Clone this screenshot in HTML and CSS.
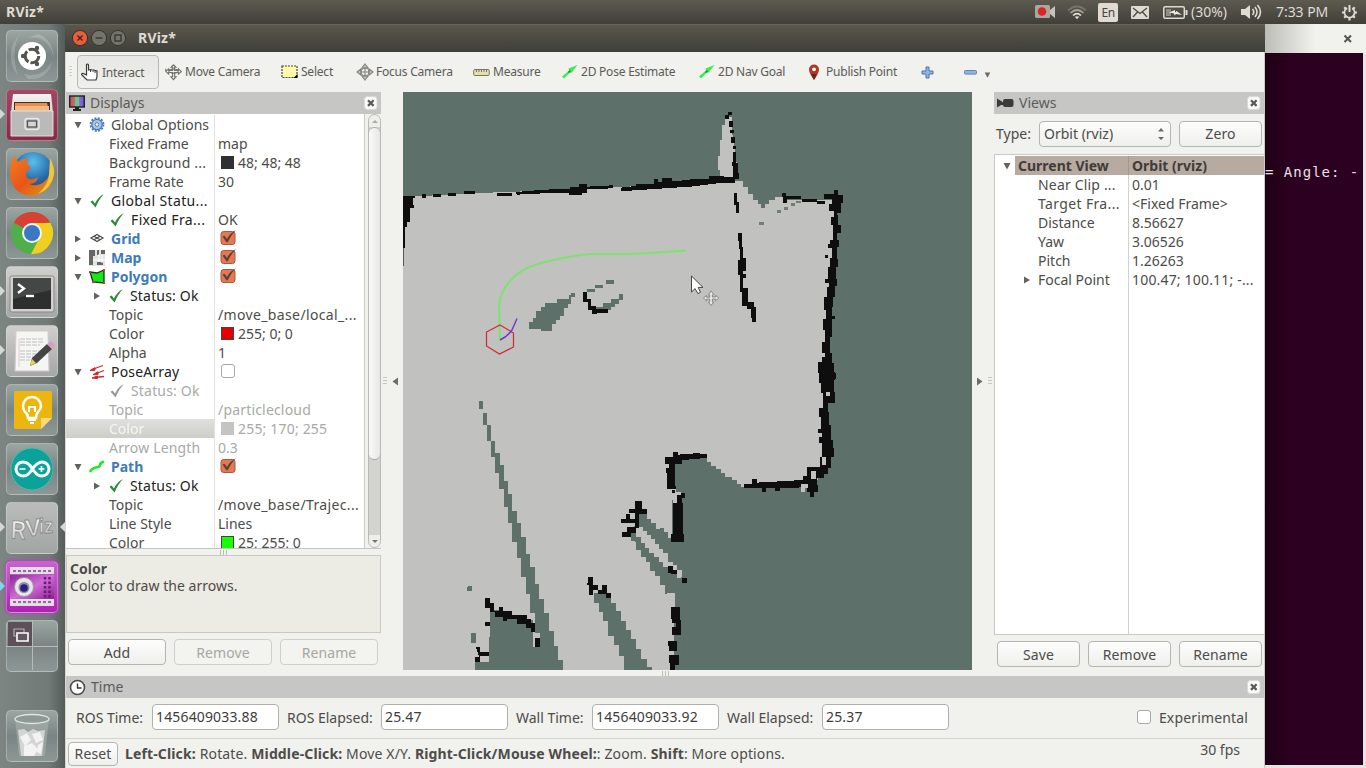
FILE: index.html
```html
<!DOCTYPE html>
<html lang="en">
<head>
<meta charset="utf-8">
<title>RViz*</title>
<link rel="stylesheet" href="styles.css">
</head>
<body>
<svg class="defs" width="0" height="0" aria-hidden="true">
  <defs>
    <linearGradient id="glass" x1="0" y1="0" x2="0" y2="1"><stop offset="0" stop-color="#f4f4f4"/><stop offset="1" stop-color="#a9a9a9"/></linearGradient>
    <linearGradient id="metal" x1="0" y1="0" x2="0" y2="1"><stop offset="0" stop-color="#ffffff"/><stop offset="1" stop-color="#c4c4c4"/></linearGradient>
    <linearGradient id="fox" x1="0" y1="0" x2="1" y2="1"><stop offset="0" stop-color="#f08020"/><stop offset=".5" stop-color="#e85518"/><stop offset="1" stop-color="#d8a018"/></linearGradient>
    <radialGradient id="globe" cx=".5" cy=".25" r=".8"><stop offset="0" stop-color="#5cc0ea"/><stop offset=".6" stop-color="#2467a8"/><stop offset="1" stop-color="#123a78"/></radialGradient>
    <linearGradient id="rgb" x1="0" y1="0" x2="1" y2="0"><stop offset="0" stop-color="#d04a5a"/><stop offset=".33" stop-color="#c46a70"/><stop offset=".34" stop-color="#69c880"/><stop offset=".66" stop-color="#69c880"/><stop offset=".67" stop-color="#8a70d8"/><stop offset="1" stop-color="#6a50d0"/></linearGradient>
    <linearGradient id="purple" x1="0" y1="0" x2="1" y2="1"><stop offset="0" stop-color="#8a2a92"/><stop offset=".5" stop-color="#d06ad6"/><stop offset="1" stop-color="#86208e"/></linearGradient>
    <symbol id="check" viewBox="0 0 16 16"><path d="M1.500 8.800 3.600 7.400 6 10.600C8 6.300 10.700 3.100 14.800 1 11.400 4.800 9 9 6.600 14.500Z"/></symbol>
    <symbol id="down" viewBox="0 0 10 10"><path d="M1.500 2h7L5 8.500z"/></symbol>
    <symbol id="right" viewBox="0 0 10 10"><path d="M2 1.500v7L8 5z"/></symbol>
    <symbol id="ticked" viewBox="0 0 18 18"><rect x="2" y="2.500" width="14" height="13" rx="2.500" fill="#e87650" stroke="#a85a43"/><path d="M3.500 7.600 5.600 6.700 8 10C10 6 12.500 3.500 17 1 13.200 5 10.800 9 8.700 13.300H7.400Z" fill="#54453c"/></symbol>
    <symbol id="close" viewBox="0 0 14 14"><rect x=".5" y=".5" width="12.500" height="13" rx="3" fill="#fbfbfa" stroke="#d8d8d6"/><path d="m4 4.300 5.600 5.600m0-5.600L4 9.900" stroke="#5a5a56" stroke-width="2.300"/></symbol>
    <symbol id="move" viewBox="0 0 18 18"><g fill="none" stroke="#74746f" stroke-width="1.200"><path d="M9 .8 6.500 3.500H8v3.200H3.800V5.200L1 7.500H.8V5M9 .8l2.500 2.700H10v3.200h4.200V5.200L17.200 8l-3 2.600V9h-4v4.500h1.500L9 16.500l-2.700-3H8V9H3.800v1.600L1 8"/><ellipse cx="9" cy="7.500" rx="5" ry="2.200"/></g></symbol>
    <symbol id="arrow2d" viewBox="0 0 18 16"><path d="M1 12.600 8 6.500 7.500 4.500 16.500 1 10.500 8.800 9.500 8 3 14.500z" fill="#3fec50"/><path d="m7 8 2-2 1 2-2 1z" fill="#0a9728"/></symbol>
  </defs>
</svg>
<div class="screen">
  <header class="panel">
    <span class="app-name">RViz*</span>
    <div class="tray">
      <svg class="t-rec" width="22" height="16" viewBox="0 0 22 16"><rect x="0" y="1" width="15" height="13" rx="1.500" fill="#a9a8a0"/><path d="m15 6 5-4v12l-5-4z" fill="#c5c4bb"/><circle cx="7" cy="7.500" r="4.300" fill="#e02222"/></svg>
      <svg class="t-wifi" width="20" height="15" viewBox="0 0 20 15" fill="none"><path d="M1 5.500Q10-2.500 19 5.500" stroke="#77766c" stroke-width="1.700"/><path d="M3.500 8Q10 2 16.500 8" stroke="#a5a499" stroke-width="1.700"/><path d="M6 10.500Q10 6.500 14 10.500" stroke="#dfdbd2" stroke-width="1.700"/><path d="m7.800 11.800 2.200 2.500 2.200-2.500Q10 10.500 7.800 11.800" fill="#dfdbd2"/></svg>
      <span class="lang">En</span>
      <svg class="t-mail" width="18" height="13" viewBox="0 0 18 13"><rect width="18" height="13" rx="1" fill="#dfdbd2"/><path d="m2 2 7 5.500L16 2M2 11l4.500-5M16 11l-4.500-5" stroke="#4a4941" stroke-width="1.300" fill="none"/></svg>
      <svg class="t-bat" width="25" height="13" viewBox="0 0 25 13"><rect x=".8" y=".8" width="20.500" height="11.400" rx="1.500" fill="none" stroke="#dfdbd2" stroke-width="1.500"/><path d="M22.500 4h2v5h-2z" fill="#dfdbd2"/><path d="M3 3h5v7H3z" fill="#8e8d83"/><path d="m6 6.500 6-2.500v2.500L13.500 5 19 9l-6-1-1.500 1.500-.5-2z" fill="#eceae2"/></svg>
      <span class="pct">(30%)</span>
      <svg class="t-vol" width="21" height="16" viewBox="0 0 21 16"><path d="M0 5h4l5-4v14l-5-4H0z" fill="#dfdbd2"/><path d="M11.500 5q2.500 3 0 6M14 3q4 5 0 10M16.500 1q6 7 0 14" stroke="#dfdbd2" stroke-width="1.600" fill="none"/></svg>
      <span class="clock">7:33 PM</span>
      <svg class="t-gear" width="17" height="17" viewBox="0 0 17 17" fill="none" stroke="#dfdbd2"><circle cx="8.500" cy="8.500" r="5" stroke-width="1.900" stroke-dasharray="25.500 6" transform="rotate(-57 8.500 8.500)"/><path d="M8.500 1v7" stroke-width="2"/><path d="M8.500 14v2.500M1 8.500h2.500M13.500 8.500H16M3.200 3.200 5 5M12 5l1.800-1.800M3.200 13.800 5 12M12 12l1.800 1.800" stroke-width="2.200"/></svg>
    </div>
  </header>
  <div class="desktop">
    <nav class="launcher">
      <div class="tile t-gray"><svg viewBox="0 0 52 52"><path d="M14 3Q4 22 12 45Q2 35 6 16ZM22 8q20-4 26 20-2-20-16-24zM18 44q18 5 28-12-4 18-24 17z" fill="#fff" opacity=".18"/><circle cx="26" cy="26" r="14" fill="#fff"/><circle cx="26" cy="26" r="6.800" fill="none" stroke="#54534e" stroke-width="3" stroke-dasharray="12.200 2"/><circle cx="17" cy="26" r="2.200" fill="#54534e"/><circle cx="31" cy="18" r="2.200" fill="#54534e"/><circle cx="31" cy="34" r="2.200" fill="#54534e"/></svg></div>
      <div class="tile t-red"><svg viewBox="0 0 52 52"><path d="M7 5h38l2 18v24H5V23z" fill="url(#glass)"/><path d="M8 13h36v8H8z" fill="#40322b"/><path d="M9 14h32l2 7H9z" fill="#e98c46"/><path d="M9 17h34v5H9z" fill="#f4b781"/><path d="M5 22h42v25H5z" fill="#bababa" stroke="#dedede"/><rect x="19" y="29.500" width="14" height="11" rx="2.500" fill="none" stroke="#e8e8e8" stroke-width="1.500"/><rect x="21.500" y="32" width="9" height="6" fill="#d5d5d5" stroke="#555" stroke-width="1.300"/></svg></div>
      <div class="tile t-gray"><svg viewBox="0 0 52 52"><circle cx="27" cy="24" r="20" fill="url(#globe)"/><path d="M4 27Q3 13 9 8l3 6q5-4 10-3l-1 5 4 4-5 4q-1 5 3 7 5 1 9-2-1 7-9 7 10 4 18-5 4-6 3-13l4 6q0 12-8 18-7 6-15 6Q6 46 4 27z" fill="url(#fox)"/><path d="M44 10q5 9 4 17-3 14-16 19 11-10 11-20z" fill="#f2c53a"/></svg></div>
      <div class="tile t-gray"><svg viewBox="0 0 52 52"><circle cx="26" cy="26" r="21" fill="#4fb04a"/><path d="M26 26 44.200 15.500A21 21 0 0 1 25 47l9-17z" fill="#f2cf1f"/><path d="M26 26 7.800 15.500A21 21 0 0 1 44.200 15.500L26 17z" fill="#da3f36"/><path d="M26 16h18.400l2 8H26z" fill="#f2cf1f"/><circle cx="26" cy="26" r="10" fill="#f4f4f4"/><circle cx="26" cy="26" r="8" fill="#3b78c4"/></svg></div>
      <div class="tile t-light"><svg viewBox="0 0 52 52"><rect x="4" y="10" width="44" height="36" rx="2" fill="#d2d2d0" stroke="#888"/><rect x="7" y="12" width="38" height="31" fill="#2d2f2e"/><path d="M7 12h38v12L7 33z" fill="#454746"/><path d="m12 18 6 4.500-6 4.500" fill="none" stroke="#fff" stroke-width="2.300"/><path d="M20 30h8" stroke="#fff" stroke-width="2.300"/></svg></div>
      <div class="tile t-light"><svg viewBox="0 0 52 52"><path d="M10 6h32l1 40H9z" fill="#f5f5f4" stroke="#ccc"/><path d="M14 14h23M14 17h23M14 20h20M14 26h22M14 29h20M14 32h14M14 35h10" stroke="#c0c0c0" stroke-width="1" stroke-dasharray="5 1"/><path d="M13 14v28" stroke="#e5caca"/><path d="m24 41 2-8L41 19l5 5-15 14z" fill="#454545"/><path d="m41 19 4-3 4 4-3 4z" fill="#dc9bc3"/><path d="m24 41 2-7 4 4z" fill="#e4d54e"/></svg></div>
      <div class="tile t-gray"><svg viewBox="0 0 52 52"><path d="M9 7h36q1 0 1 2v25L35 45H9q-1 0-1-2V9q0-2 1-2z" fill="#edb60f"/><path d="M35 45V34h11z" fill="#f9dc7a"/><path d="M22 34q0-4-3-6-2-3-2-6a9 9 0 0 1 18 0q0 3-3 6-2 2-2 6z" fill="none" stroke="#fff" stroke-width="2.500"/><path d="M23 28v-5h6v5M22 36h8M24 39h4" stroke="#fff" stroke-width="2" fill="none"/></svg></div>
      <div class="tile t-gray"><svg viewBox="0 0 52 52"><circle cx="26" cy="26" r="21" fill="#0ba29a" stroke="#4cbdb6"/><path d="M26.500 26C23 20 20 19 17 19a7 7 0 0 0 0 14c4 0 6-2 9.500-7s6-7 9.500-7a7 7 0 0 1 0 14c-4 0-6-2-9.500-7z" fill="none" stroke="#fff" stroke-width="3"/><path d="M13.500 26h6M32.500 26h6M35.500 23v6" stroke="#fff" stroke-width="1.700"/></svg></div>
      <div class="tile t-mid"><svg viewBox="0 0 52 52"><g class="rviz-logo"><text x="5" y="37" font-size="26" textLength="15" lengthAdjust="spacingAndGlyphs" transform="rotate(3 12 28)">R</text><text x="19" y="34" font-size="24" textLength="16" lengthAdjust="spacingAndGlyphs" transform="rotate(-5 26 26)">V</text><text x="33" y="31" font-size="20" textLength="14" lengthAdjust="spacingAndGlyphs">iz</text></g></svg></div>
      <div class="tile t-purple"><svg viewBox="0 0 52 52"><rect x="4" y="14" width="44" height="25" fill="url(#purple)"/><path d="M4 6h44v7H4zM4 38h44v7H4z" fill="#e6dce8"/><path d="M7 10h38M7 41h38" stroke="#8f6e96" stroke-width="2" stroke-dasharray="3 2"/><path d="M39 16v21M43.500 16v21" stroke="#6c1a76" stroke-width="2.500" stroke-dasharray="2.500 2"/><circle cx="18" cy="26" r="9.500" fill="#e6e6e8" stroke="#999"/><circle cx="18" cy="26.500" r="5.500" fill="#8d8d9c"/><circle cx="18" cy="27" r="3.800" fill="#2d1b8a"/></svg></div>
      <div class="tile t-gray"><svg viewBox="0 0 52 52"><path d="M2 2h25v25H2z" fill="#5e5059"/><path d="M26.500 0v50M0 26.500h52" stroke="#b5bcba" stroke-width="1"/><path d="M8 9h10v7H8z" fill="none" stroke="#b5adb2" stroke-width="1.200"/><path d="M11 13h11v8H11z" fill="#65565f" stroke="#fff" stroke-width="1.600"/></svg></div>
      <div class="tile t-gray trash"><svg viewBox="0 0 52 52"><path d="M9 8h34l-4 38H13z" fill="#a9b0ae" opacity=".6"/><path d="m12 20 6-1 4 3 5-3 5 2 7-1-3 26H15z" fill="#d2d5d4"/><path d="m14 27 7-4 4 7-6 6zm12-3 8-2 3 8-7 3zm-8 12 8-3 6 6-4 7H18zm14-1 5-3-2 12-4-2z" fill="#fff" opacity=".7"/><ellipse cx="26" cy="9" rx="17" ry="4.500" fill="#8f9896" stroke="#dfe3e1" stroke-width="1.400"/></svg></div>
      <i class="pip p1"></i><i class="pip p2"></i><i class="pip p3"></i><i class="pip p4"></i><i class="pip p5"></i><i class="pip back"></i>
    </nav>

    <main class="window">
      <div class="titlebar">
        <svg width="58" height="18" viewBox="0 0 58 18"><circle cx="9" cy="9" r="7.600" fill="#e75e3c" stroke="#35342e"/><path d="m6.500 6.500 5 5m0-5-5 5" stroke="#5a2318" stroke-width="1.500"/><circle cx="28" cy="9" r="7.600" fill="#75746c" stroke="#35342e"/><path d="M24.500 9h7" stroke="#3b3a34" stroke-width="1.500"/><circle cx="47" cy="9" r="7.600" fill="#75746c" stroke="#35342e"/><path d="M44 6h6v6h-6z" fill="none" stroke="#3b3a34" stroke-width="1.500"/></svg>
        <span>RViz*</span>
      </div>
      <div class="toolbar">
        <span class="grip"></span>
        <div class="tool active w1"><svg width="18" height="18" viewBox="0 0 18 18"><path d="M5.500 9V2q0-1 1-1t1 1v5l2-.5 1.500.5 2 0 1.500.7 1.500.3v6l-1 3H6L1 12q-.8-1 .2-1.500T5.500 12z" fill="#fff" stroke="#3a3a37" stroke-width="1.200"/><path d="M9.500 7v2M12 7.500V9M14 8v2" stroke="#3a3a37"/></svg><span>Interact</span></div>
        <div class="tool w2"><svg width="17" height="17"><use href="#move"/></svg><span>Move Camera</span></div>
        <div class="tool w3"><svg width="17" height="14" viewBox="0 0 17 14"><rect x="1" y="1" width="15" height="11.500" fill="#fff9ae" stroke="#494833" stroke-width="1.200" stroke-dasharray="2 1"/><path d="M16.500 9v4h-4z"/></svg><span>Select</span></div>
        <div class="tool w4"><svg width="18" height="18" viewBox="0 0 18 18" fill="none" stroke="#85857f" stroke-width="1.200"><path d="m9 1 3 4H6zM9 17l3-4H6zM1 9l4-3v6zM17 9l-4-3v6z" fill="#c9c9c4"/><circle cx="9" cy="9" r="4"/><path d="M9 5v8M5 9h8"/></svg><span>Focus Camera</span></div>
        <div class="tool w5"><svg width="17" height="9" viewBox="0 0 17 9"><rect x=".7" y="1.500" width="15.500" height="6" rx="1" fill="#e5dfab" stroke="#77756a"/><path d="M3.500 2v2M6 2v2M8.500 2v2M11 2v2M13.500 2v2" stroke="#77756a"/></svg><span>Measure</span></div>
        <div class="tool w6"><svg width="18" height="16"><use href="#arrow2d"/></svg><span>2D Pose Estimate</span></div>
        <div class="tool w7"><svg width="18" height="16"><use href="#arrow2d"/></svg><span>2D Nav Goal</span></div>
        <div class="tool w8"><svg width="14" height="17" viewBox="0 0 14 17"><path d="M7 16Q2 9 2 5.500a5 5 0 0 1 10 0Q12 9 7 16z" fill="#b23527"/><path d="M4 10h6l-3 6z" fill="#5b3024"/><circle cx="7" cy="5.300" r="1.900" fill="#fff"/></svg><span>Publish Point</span></div>
        <div class="tool w9"><svg width="13" height="13" viewBox="0 0 13 13"><path d="M5 1h3v4h4v3H8v4H5V8H1V5h4z" fill="#8fb4e0" stroke="#4a74ab"/></svg></div>
        <div class="tool"><svg width="13" height="5" viewBox="0 0 13 5"><rect x=".5" y=".5" width="12" height="3.600" rx="1" fill="#8fb4e0" stroke="#5f87ba"/></svg><svg class="caret" width="9" height="8" fill="#6b6b66"><use href="#down"/></svg></div>
      </div>

      <div class="center">
        <section class="displays">
          <div class="dock-head"><svg width="16" height="17" viewBox="0 0 16 17"><rect x=".7" y="1" width="14.600" height="11" fill="url(#rgb)" stroke="#222" stroke-width="1.400"/><path d="M6 12h4v2h2v2H4v-2h2z" fill="#222"/></svg><span>Displays</span><svg class="x" width="14" height="14"><use href="#close"/></svg></div>
          <div class="tree-wrap">
            <div class="tree">
              <div class="row"><div class="k top"><svg class="ar"><use href="#down"/></svg><svg class="ic" viewBox="0 0 16 16"><circle cx="8" cy="7.500" r="5.200" fill="#a9c7e8" stroke="#4a7db8" stroke-width="1.300"/><circle cx="8" cy="7.500" r="6.500" fill="none" stroke="#4a7db8" stroke-width="1.800" stroke-dasharray="2 1.400"/><circle cx="8" cy="7.500" r="1.800" fill="#fff" stroke="#4a7db8"/></svg><span>Global Options</span></div><div class="v"></div></div>
              <div class="row"><div class="k prop">Fixed Frame</div><div class="v">map</div></div>
              <div class="row"><div class="k prop wide">Background ...</div><div class="v"><i class="sw dark"></i>48; 48; 48</div></div>
              <div class="row"><div class="k prop">Frame Rate</div><div class="v">30</div></div>
              <div class="row blk"><div class="k top wider"><svg class="ar"><use href="#down"/></svg><svg class="ic ok"><use href="#check"/></svg><span>Global Statu...</span></div><div class="v"></div></div>
              <div class="row blk"><div class="k stat wider"><svg class="ic ok"><use href="#check"/></svg><span>Fixed Fra...</span></div><div class="v soft">OK</div></div>
              <div class="row"><div class="k top"><svg class="ar"><use href="#right"/></svg><svg class="ic" viewBox="0 0 16 16" fill="none" stroke="#4b4b48" stroke-width="1.200"><path d="m8 3.500 6 3.500-6 3.500L2 7zM5 5.200l6 3.600M11 5.200 5 8.800"/></svg><b>Grid</b></div><div class="v"><svg class="cb"><use href="#ticked"/></svg></div></div>
              <div class="row"><div class="k top"><svg class="ar"><use href="#right"/></svg><svg class="ic" viewBox="0 0 16 16"><path d="M0 0h16v16H0z" fill="#e4e4e3"/><path d="M0 0h6v6H4v9H0zM8 0h2v5H8zM12 0h4v4h-4zM8 12h6v3H8z" fill="#666663"/><path d="M4 10h12M10 4v8M13 5v8" stroke="#fff"/></svg><b>Map</b></div><div class="v"><svg class="cb"><use href="#ticked"/></svg></div></div>
              <div class="row"><div class="k top"><svg class="ar"><use href="#down"/></svg><svg class="ic" viewBox="0 0 16 16"><path d="m1 3 7 1 7-3v13L4 13z" fill="#19e619" stroke="#14391a" stroke-width="1.300"/><path d="M0 2h2v2H0zM14 0h2v2h-2zM3 12h2v2H3zM14 13h2v2h-2z" fill="#e03030"/></svg><b>Polygon</b></div><div class="v"><svg class="cb"><use href="#ticked"/></svg></div></div>
              <div class="row blk"><div class="k stat2 wide"><svg class="ar"><use href="#right"/></svg><svg class="ic ok"><use href="#check"/></svg><span>Status: Ok</span></div><div class="v"></div></div>
              <div class="row"><div class="k prop">Topic</div><div class="v wider">/move_base/local_...</div></div>
              <div class="row"><div class="k prop">Color</div><div class="v"><i class="sw red"></i>255; 0; 0</div></div>
              <div class="row"><div class="k prop">Alpha</div><div class="v">1</div></div>
              <div class="row blk"><div class="k top wide"><svg class="ar"><use href="#down"/></svg><svg class="ic" viewBox="0 0 16 16" fill="none" stroke="#d02a2a"><path d="M3 5.500 14 1.500M7 9.500 15 6.500M6 13.500l9-1" stroke-width="1.300"/><path d="m1 6.500 5-2.800v2.600zM4 10.700l5-3v2.800zM3 14l5.500-2v2.600z" fill="#d02a2a" stroke-width="1"/></svg><span>PoseArray</span></div><div class="v"><i class="box"></i></div></div>
              <div class="row dim"><div class="k stat wide"><svg class="ic off"><use href="#check"/></svg><span>Status: Ok</span></div><div class="v"></div></div>
              <div class="row dim"><div class="k prop">Topic</div><div class="v wide">/particlecloud</div></div>
              <div class="row dim"><div class="k prop sel">Color</div><div class="v wide"><i class="sw gray"></i>255; 170; 255</div></div>
              <div class="row dim"><div class="k prop wide">Arrow Length</div><div class="v">0.3</div></div>
              <div class="row"><div class="k top"><svg class="ar"><use href="#down"/></svg><svg class="ic" viewBox="0 0 16 16"><path d="M1 13q2-4 6-4.500T11 6t4-3.500" fill="none" stroke="#22e826" stroke-width="2.600"/></svg><b>Path</b></div><div class="v"><svg class="cb"><use href="#ticked"/></svg></div></div>
              <div class="row blk"><div class="k stat2 wide"><svg class="ar"><use href="#right"/></svg><svg class="ic ok"><use href="#check"/></svg><span>Status: Ok</span></div><div class="v"></div></div>
              <div class="row"><div class="k prop">Topic</div><div class="v wider">/move_base/Trajec...</div></div>
              <div class="row"><div class="k prop">Line Style</div><div class="v">Lines</div></div>
              <div class="row"><div class="k prop">Color</div><div class="v"><i class="sw green"></i>25; 255; 0</div></div>
            </div>
            <div class="scroll"><span class="btn-up"></span><span class="thumb"></span><span class="rest"></span><span class="btn-dn"></span></div>
          </div>
          <div class="hsplit"><i></i><i></i><i></i></div>
          <div class="desc"><b>Color</b><span>Color to draw the arrows.</span></div>
          <div class="buttons"><span class="button">Add</span><span class="button off">Remove</span><span class="button off">Rename</span></div>
        </section>
        <div class="vsplit left"><i class="dots"></i><svg width="9" height="9" fill="#6d6d69"><path d="M7 .5v8L1.500 4.500z"/></svg></div>
        <svg class="map" width="569" height="578" viewBox="403 92 569 578">
          <rect x="403" y="92" width="569" height="578" fill="#5d7069"/>
          <g shape-rendering="crispEdges">
            <path fill="#c1c1bf" d="M403 197 480 193 560 190 740 181 H743V187H748V194H753V200H758V204H761V208H765V204H769V200H775V197H784V200H836V215L832 260 828 320 824 380 829 460 815 484 745 487H741V484H737V480H732V477H725V473H721V469H716V466H711V462H707V458H672V545H668V532H664V528H660V534L640 514 630 535 650 560 676 600V670H403Z"/>
            <g transform="translate(690 90) scale(.33333)">
              <path fill="#c1c1bf" d="M90 262V240H85V198H90V150H97V105H105V80H125V120L135 180 145 262Z"/>
              <path fill="#0d0e0d" d="M114 66h12v10h-12zM105 76h12v10h-12zM117 93h12v17h-12zM120 120h12v10h-12zM123 140h12v20h-12zM128 168h9v10h-9zM129 186h10v34h4v28h5v20h-18v-40h-3zM0 268 57 266V258H103V262H136V278H100L0 290ZM132 308h10v28h5v32h-10v-22h-5zM144 429h12v42h4v32h7v40h-8v10h9v11h-10v30h17v42h18v14h5v47h-12v-12h-4v-28h-12v-10h-14v-40h-5v-52h-6v-46h6v-32h-4z"/>
              <path fill="#0d0e0d" d="M276 309h12v8h46v9h46v8h26v8h-24v-6h-45v-8h-45v11H280ZM403 312H431V300H445V314H460V338H453V368H440V375H445V405H452V428H442V450H447V470H440V508H445V532H438V568H442V588H436V620H430V650H425V677H434V686H427V740H421V790H426V820H432V845H436V870H388V850H385V815H395V800H405V788H397V755H405V720H399V686H408V660H402V622H410V590H416V578H406V567H414V530H421V505H427V473H415V462H420V450H428V405H424V380H432V362H418V342H426V326H403ZM404 494h11v9h-11z"/>
              <path fill="#6d7f77" d="M261 360h12v10h-12zM282 350h12v9h-12zM303 339h11v8h-11zM208 395h13v9h-13zM318 332h16v6h-16z"/>
            </g>
            <g transform="translate(400 90) scale(.33333)">
              <path fill="#0d0e0d" d="M9 317H45V325H38V345H42V354H30V395H20V411H15V474H9ZM67 313h11v10H67zM100 311h23v9h-23zM145 309h24v9h-24zM192 303h32v10h-32zM291 310h45v7h-45zM348 306 435 299 510 296V292H537V283H560V290L638 286V295L560 298V309H545V315H507V308L430 310 350 314ZM663 293 708 288V282H762V268H775V276H787V265H815V273L900 269V288L690 302H663Z"/>
              <path fill="#555654" d="M9 474h4v55H9z"/>
              <path fill="#5d7069" d="M513 609h12v11h-12v21h-8v14h-12v23h-12v12h-12v12h-12v22h-35v-7h-36v-21h12v-12h10v-20h15v-12h12v-12h37v-12h36v-12h7zM562 598h22v8h-22zM584 585h24v8h-24zM618 570h24v11h-24zM656 611h13v20h-12v10h-12v10h-13v10h-50v-10h26v-12h24v-12h24z"/>
              <path fill="#0d0e0d" d="M549 607h12v20h12v22h14v8h37v11h-34v3h-15v-11h-11v-24h-15z"/>
            </g>
            <g transform="translate(400 380) scale(.33333)">
              <g fill="#5d7069">
                <path d="M237 63h12v24h-12zM249 100h12v35h-12zM261 135h12v48h-12zM273 183h12v47h-12zM285 220V280H297V328H312V380H324V430H337V485H351V535H363V590H378V643H390V700H405V760H420V869H489V840H475V798H462V753H447V700H432V657H417V613H405V562H390V522H378V470H363V430H351V392H336V342H324V304H312V255H300V220z"/>
                <path d="M270 690H310V705H350V720H400V800H430V870H225V845H267V770H270ZM203 618h12v14h-14zM214 759h13v30h-13z"/>
                <path d="M582 640H633V668H648V693H663V722H678V750H693V778H708V808H723V836H740V862H755V870H672V828H658V796H642V768H625V722H610V695H596V668H582Z"/>
                <path d="M718 402H740V416H754V428H768V446H783V462H798V475H812V485H825V560H900V870H826V655H812V641H796V614H780V587H765V573H750V546H737V532H722V510H708V484H693V462H708V470H722V488H735V505H750V519H762V532H776V545H790V558H806V572H840V560H820V545H805V515H790V505H778V490H765V476H752V465H738V450H718Z"/>
                <path d="M822 245H925V870H822V560L845 485H822Z"/>
              </g>
              <path fill="#c1c1bf" d="M728 440V452H742V466H752V478H765V492H778V506H790V518H803V545H818V555H832V570H845V592H832V580H804V560H790V545H776V532H762V519H748V505H735V488H722V470H708V440ZM800 640h25v45h-12v170h-18zM812 318h15v17h15v12h-11v23h-12z"/>
              <path fill="#0d0e0d" d="M255 655H270V668H282V692H296V682H309V692H335V704H380V716H392V730H405V757H392V743H378V732H350V718H322V722H309V710H284V696H270V684H255ZM255 726h15v13h-15zM228 801h12v14h27v13h-27v17h-15v-14h13zM404 773h16v28h-16zM564 590h15v25h14v14h13v-14h15v25h12v15h-15v-12h-24v-12h-15v14h-13v-30h-4zM704 363h21v24h15v14h-24v43h-8v14h-15v14h-26v-15h13v-15h24v-14h-40v-11h14v-14h13v14h13v-17h-16v-12h16zM804 558h14v12h13v13h-18v-5h-10zM846 595h15v13h-15zM795 230H820V216H834V224L900 219V236L847 240V252H824V318H828V328H802V280H798V265H808V253H795ZM815 330h11v10h-11zM843 338h12v16h-10v16h3v92h4v24h-39v-24h7v-92h10v-25h13z"/>
              <path fill="#0d0e0d" d="M813 682h26v37h5v47h-27v-26h10v-12h-12zM805 783h27v29h-25v-14h-4zM808 826h28v28h-11v16h-14v-22h-5z"/>
            </g>
            <g transform="translate(660 370) scale(.33333)">
              <path fill="#0d0e0d" d="M477 0H517V8H527V28H521V65H525V100H503V125H507V165H514V210H519V235H522V260H513V294H504V312H493V323H470V345H474V365H462V380H450V367H440V350H418V355H360V362H345V353H317V365H305V353H252V343H276V328H290V338L430 330V318H442V292H480V262H486V220H478V202H486V188H474V178H484V142H478V115H490V70H484V38H478ZM60 258 110 252H141V263H65Z"/>
              <path fill="#c1c1bf" d="M498 66h11v11h-11zM486 262h13v23h-13zM453 304h14v22h-13zM422 343h13v24h-13zM435 343h10v10h-10z"/>
              <path fill="#c1c1bf" d="M50 600h14v24H50z"/>
            </g>
          </g>
          <g fill="none">
            <path d="M686 250Q684 251 680 251L630 254H590Q575 255 550 261 528 265 516 275 501 288 499 304L500 341" stroke="#7de36c" stroke-width="2"/>
            <path d="m500 325 13.500 8v14L499.500 354l-13-8v-14z" stroke="#d0263c" stroke-width="1.200"/>
            <path d="M500 340q8-4 12-10l5-11.500" stroke="#6a35d0" stroke-width="1.400"/>
          </g>
          <path d="M691.500 276v16l3.600-3.400 2.800 5 2.600-1.200-2.300-5h4.800z" fill="#fff" stroke="#444"/>
          <g transform="translate(703 290) scale(.9)" opacity=".85"><path d="m9 1 3 4-1.500.3v2.500H14V6l3.500 3-3.500 3v-2h-3.500v3.500H12L9 17l-3-3.500h1.500V10H4v2L.5 9 4 6v2h3.500V5.500H6z" fill="#eee" stroke="#777"/></g>
        </svg>
        <div class="vsplit right"><svg width="9" height="9" fill="#6d6d69"><path d="M2 .5v8L7.500 4.500z"/></svg><i class="dots"></i></div>
        <section class="views">
          <div class="dock-head"><svg width="17" height="12" viewBox="0 0 17 12" fill="#3b3b38"><path d="m0 1.500 5 3v3l-5 3zM4 5h3v3H4z"/><rect x="6" y="2" width="10.500" height="8" rx="2"/></svg><span>Views</span><svg class="x" width="14" height="14"><use href="#close"/></svg></div>
          <div class="type-row"><span>Type:</span><span class="combo">Orbit (rviz)<svg width="8" height="14" viewBox="0 0 8 14" fill="#6a6a66"><path d="m4 1 3 3.500H1zM4 13l3-3H1z"/></svg></span><span class="button zero">Zero</span></div>
          <div class="vtree">
            <div class="row head"><div class="k"><svg class="ar"><use href="#down"/></svg><b>Current View</b></div><div class="v"><b>Orbit (rviz)</b></div></div>
            <div class="row"><div class="k wide">Near Clip ...</div><div class="v">0.01</div></div>
            <div class="row"><div class="k wider">Target Fra...</div><div class="v">&lt;Fixed Frame&gt;</div></div>
            <div class="row"><div class="k">Distance</div><div class="v">8.56627</div></div>
            <div class="row"><div class="k">Yaw</div><div class="v">3.06526</div></div>
            <div class="row"><div class="k">Pitch</div><div class="v">1.26263</div></div>
            <div class="row"><div class="k focal"><svg class="ar"><use href="#right"/></svg>Focal Point</div><div class="v wide">100.47; 100.11; -...</div></div>
            <div class="row fill"><div class="k"></div><div class="v"></div></div>
          </div>
          <div class="buttons"><span class="button">Save</span><span class="button">Remove</span><span class="button">Rename</span></div>
        </section>
      </div>
      <div class="tsplit"><i></i><i></i><i></i></div>
      <div class="dock-head time"><svg width="17" height="17" viewBox="0 0 17 17"><circle cx="8.500" cy="8.500" r="7" fill="#fff" stroke="#4b4b48" stroke-width="1.600"/><path d="M8.500 4.500v4.500h4" fill="none" stroke="#333" stroke-width="1.400"/></svg><span>Time</span><svg class="x" width="14" height="14"><use href="#close"/></svg></div>
      <div class="times">
        <span class="lab l1">ROS Time:</span><span class="field">1456409033.88</span>
        <span class="lab l2">ROS Elapsed:</span><span class="field">25.47</span>
        <span class="lab l3">Wall Time:</span><span class="field">1456409033.92</span>
        <span class="lab l4">Wall Elapsed:</span><span class="field">25.37</span>
        <span class="exp"><i class="box"></i>Experimental</span>
      </div>
      <footer class="status"><span class="button reset">Reset</span><p><b>Left-Click:</b> Rotate. <b>Middle-Click:</b> Move X/Y. <b>Right-Click/Mouse Wheel:</b>: Zoom. <b>Shift</b>: More options.</p><span class="fps">30 fps</span></footer>
    </main>

    <aside class="terminal">
      <div class="term-head"><svg width="10" height="10" viewBox="0 0 10 10"><path d="m1.500 1.500 6.500 6.500M8 1.500 1.500 8" stroke="#55554f" stroke-width="2"/></svg></div>
      <div class="term-body"><pre>= Angle: -</pre></div>
    </aside>
  </div>
</div>
</body>
</html>
```
FILE: styles.css
```css
* { box-sizing: border-box; }
body { margin: 0; font-family: "Noto Sans", "Open Sans", sans-serif; font-size: 14px; color: #4c4c49; }
.defs { display: block; position: absolute; }
svg { display: block; flex: none; }
i { display: block; flex: none; }
.screen { width: 1366px; height: 768px; overflow: hidden; display: flex; flex-direction: column; }

.panel { height: 24px; flex: none; display: flex; align-items: center; justify-content: space-between; background: linear-gradient(#5d5b50, #403f39); color: #dfdbd2; }
.app-name { padding: 0 0 1px 6px; font-weight: bold; font-size: 14px; letter-spacing: .2px; }
.tray { display: flex; align-items: center; padding-right: 8px; }
.t-rec { margin-right: 10px; }
.t-wifi { margin-right: 11px; }
.lang { width: 20px; height: 19px; border-radius: 2px; background: #dfdbd2; color: #45443d; font-size: 12px; line-height: 20px; text-align: center; letter-spacing: -.5px; margin-right: 13px; }
.t-mail { margin-right: 14px; }
.t-bat { margin-right: 3px; }
.pct { width: 38px; margin-right: 12px; white-space: nowrap; padding-bottom: 1px; }
.t-vol { margin-right: 14px; }
.clock { width: 53px; margin-right: 12px; white-space: nowrap; letter-spacing: -.05px; padding-bottom: 1px; }

.desktop { flex: 1; display: flex; min-height: 0; }
.launcher { position: relative; width: 65px; flex: none; padding: 6px 7px 0 6px; display: flex; flex-direction: column; gap: 7px; background: linear-gradient(90deg, #7d8583, #717a77 75%, #555d5b); }
.tile { width: 52px; height: 52px; flex: none; border-radius: 5px; border: 1px solid rgba(225,232,230,.35); }
.tile svg { width: 52px; height: 52px; margin: -1px; }
.t-gray { background: linear-gradient(#9ba6a3, #7a8482 50%, #8d9795); }
.t-red { background: linear-gradient(#a34762, #8b2847); }
.t-light { background: linear-gradient(#cfcfcd, #a5a6a5); }
.t-mid { background: linear-gradient(#b9bcba, #a1a5a3); }
.t-purple { background: linear-gradient(#c962cf, #ae22b5); box-shadow: 0 0 3px 1px #c13bc9; }
.trash { margin-top: 31px; }
.rviz-logo { font-family: "Liberation Sans", sans-serif; font-weight: bold; fill: url(#metal); stroke: #858785; stroke-width: .8px; }
.pip { position: absolute; left: 0; border: 5px solid transparent; border-left-color: #d5d8d7; border-right: 0; }
.p1 { top: 85px; } .p2 { top: 262px; } .p3 { top: 321px; } .p4 { top: 498px; } .p5 { top: 557px; border-left-color: #80d4ef; }
.back { top: 498px; left: 60px; border-right: 5px solid #d5d8d7; border-left: 0; }

.window { width: 1200px; flex: none; display: flex; flex-direction: column; background: #f1f1ed; border-left: 1px solid #d7d7d2; border-right: 1px solid #c9c9c4; }
.titlebar { height: 28px; flex: none; display: flex; align-items: center; gap: 9px; padding-left: 6px; margin: 0 -1px; background: linear-gradient(#5a584d, #3f3e38); border-top: 1px solid #67655a; color: #dfdbd2; font-weight: bold; font-size: 14px; letter-spacing: .2px; }
.titlebar span, .titlebar svg { margin-bottom: 1px; }
.titlebar span { padding-bottom: 1px; }
.toolbar { height: 40px; flex: none; display: flex; align-items: center; font-size: 12px; color: #5b5b57; letter-spacing: -.22px; }
.grip { width: 3px; height: 12px; margin: 0 5px 0 3px; background: repeating-linear-gradient(#d0d0cb 0 1px, transparent 1px 3px); }
.tool { display: flex; align-items: center; gap: 3px; white-space: nowrap; flex: none; }
.tool span { padding-bottom: 2px; }
.active { height: 34px; border: 1px solid #b9b9b4; border-radius: 4px; background: linear-gradient(#e7e7e4, #efefec); padding-left: 3px; margin-right: 6px; }
.active span { padding-bottom: 0; }
.w1 { width: 82px; } .w2 { width: 116px; } .w3 { width: 75px; } .w4 { width: 117px; gap: 2px; } .w5 { width: 88px; } .w6 { width: 137px; gap: 2px; } .w7 { width: 109px; gap: 2px; } .w8 { width: 114px; gap: 5px; } .w9 { width: 43px; }
.caret { margin: 5px 0 0 3px; }

.center { height: 578px; flex: none; display: flex; }
.displays { width: 315px; flex: none; display: flex; flex-direction: column; }
.dock-head { height: 22px; flex: none; display: flex; align-items: center; gap: 5px; padding: 0 3px; background: #c6c6c4; color: #5b5b58; }
.dock-head span { padding-bottom: 2px; }
.dock-head .x { margin-left: auto; }
.tree-wrap { display: flex; height: 435px; border-bottom: 1px solid #c5c5c0; overflow: hidden; flex: none; }
.tree { width: 299px; background: #fff; border-right: 1px solid #c9c9c5; padding-top: 1px; }
.row { display: grid; grid-template-columns: 149px 1fr; height: 19px; line-height: 19px; white-space: nowrap; }
.row > div { display: flex; align-items: center; overflow: hidden; }
.k { border-right: 1px solid #e1e1de; }
.v { padding-left: 3px; }
.wide { letter-spacing: .18px; }
.wider { letter-spacing: .36px; }
.top { padding-left: 7px; }
.top span, .top b, .stat span, .stat2 span { margin-left: 6px; }
.row b { color: #3b7cb8; }
.prop { padding-left: 43px; }
.stat { padding-left: 43px; }
.stat2 { padding-left: 26px; }
.stat2 .ic { margin-left: 6px; }
.ar { width: 10px; height: 10px; fill: #62625f; }
.ic { width: 16px; height: 16px; }
.top .ic { margin-left: 6px; }
.ok { fill: #2c8a35; }
.off { fill: #999995; }
.cb { width: 18px; height: 18px; margin: 0 0 1px 1px; }
.blk { color: #222220; }
.soft { color: #4c4c49; }
.dim { color: #a9a9a6; }
.sel { background: linear-gradient(#e0e0dc, #cdcdc9); color: #f6f6f3; align-self: stretch; }
.sw { width: 13px; height: 13px; margin: 0 4px 0 3px; border: 1px solid #444; }
.dark { background: #303030; border-color: #303030; }
.red { background: #e80000; }
.gray { background: #c4c4c2; border-color: #c4c4c2; }
.green { background: #19ff00; }
.box { width: 14px; height: 14px; border: 1px solid #a9a9a4; border-radius: 3px; background: #fff; }
.v .box { margin: 0 0 2px 3px; }
.scroll { width: 13px; margin-left: 3px; display: flex; flex-direction: column; background: #d3d3d0; border: 1px solid #b9b9b5; border-radius: 7px; overflow: hidden; }
.btn-up, .btn-dn { height: 12px; background: #eeeeeb; display: flex; justify-content: center; flex: none; }
.btn-up::after, .btn-dn::after { content: ""; align-self: center; border: 3px solid transparent; border-top: 0; border-bottom: 3px solid #aaaaa6; }
.btn-dn::after { border-bottom: 0; border-top: 3px solid #777773; }
.thumb { height: 333px; border: 1px solid #aaaaa6; border-width: 1px 0; border-radius: 6px; background: linear-gradient(90deg, #fafaf8, #e7e7e4); }
.rest { flex: 1; }
.hsplit, .tsplit { height: 6px; flex: none; display: flex; gap: 2px; justify-content: center; align-items: center; }
.hsplit i, .tsplit i { width: 1px; height: 5px; background: #bcbcb7; }
.desc { height: 78px; flex: none; background: #ecebe4; border: 1px solid #c9c9c2; padding: 4px 3px; display: flex; flex-direction: column; line-height: 17px; letter-spacing: .04px; }
.buttons { display: flex; gap: 8px; padding: 6px 2px 0; }
.button { height: 26px; border: 1px solid #b5b5b0; border-radius: 4px; background: linear-gradient(#fdfdfc, #efefec); display: flex; align-items: center; justify-content: center; flex: none; letter-spacing: .1px; }
.displays .button { width: 98px; }
.button.off { color: #a7a7a3; background: #f3f3f0; border-color: #cfcfca; }
.vsplit { width: 22px; display: flex; align-items: center; justify-content: center; gap: 4px; flex: none; }
.dots { width: 4px; height: 9px; background: repeating-linear-gradient(#c6c6c1 0 1px, transparent 1px 3px); }
.left { margin-left: 1px; padding-right: 3px; }
.right { padding-left: 1px; }
.map { margin-left: -1px; }

.views { width: 270px; display: flex; flex-direction: column; }
.type-row { height: 40px; display: flex; align-items: center; padding-left: 2px; flex: none; }
.type-row > span:first-child { width: 43px; padding-bottom: 1px; }
.combo { width: 132px; height: 26px; border: 1px solid #b5b5b0; border-radius: 4px; background: linear-gradient(#fdfdfc, #efefec); display: flex; align-items: center; justify-content: space-between; padding: 0 5px 1px 4px; margin-right: 8px; }
.zero { width: 83px; padding-bottom: 1px; }
.vtree { height: 481px; flex: none; background: #fff; border: 1px solid #c9c9c5; border-right: 0; padding-top: 1px; display: flex; flex-direction: column; }
.vtree .row { grid-template-columns: 134px 1fr; flex: none; }
.vtree .row.fill { height: auto; flex: 1; }
.vtree .k { padding-left: 43px; border-color: #d2d2cf; }
.vtree .focal { padding-left: 27px; }
.focal .ar { margin-right: 6px; }
.vtree .head { background: linear-gradient(90deg, #fff 20px, #b7aaa1 20px); }
.vtree .head .k { padding-left: 7px; border-color: #a3978f; }
.vtree .head .ar { margin-right: 6px; }
.row.head b { color: #3f3c3a; }
.views .buttons { padding: 6px 2px 0 3px; gap: 8px; }
.views .button { width: 83px; }

.time { padding-left: 3px; }
.times { height: 41px; flex: none; border-bottom: 1px solid #d5d5d0; display: flex; align-items: center; padding: 0 16px 2px 10px; white-space: nowrap; }
.lab { flex: none; }
.l1 { width: 76px; } .l2 { width: 94px; } .l3 { width: 76px; } .l4 { width: 95px; }
.field { width: 127px; height: 26px; flex: none; background: #fff; border: 1px solid #b0b0ab; border-radius: 4px; padding-left: 3px; line-height: 24px; margin-right: 8px; color: #3c3c3a; letter-spacing: .15px; }
.exp { margin-left: auto; display: flex; align-items: center; gap: 8px; letter-spacing: .15px; }
.status { flex: 1; display: flex; align-items: center; padding: 0 24px 0 2px; }
.status p { margin: 0 auto 0 7px; white-space: nowrap; letter-spacing: .14px; }
.reset { width: 50px; height: 24px; }
.fps { padding-bottom: 8px; }

.terminal { flex: 1; display: flex; flex-direction: column; background: #e7e5e0; }
.term-head { height: 29px; flex: none; display: flex; align-items: center; justify-content: flex-end; padding-right: 13px; background: linear-gradient(90deg, #bdbdb8, #f1f1ed 50px); }
.term-body { flex: 1; margin: 0 3px 3px 0; background: linear-gradient(90deg, #1e0015, #2c0020 24px); color: #e6e1e4; overflow: hidden; }
.term-body pre { margin: 110px 0 0; font: 14px/18px "DejaVu Sans Mono", monospace; letter-spacing: 1px; }
```
